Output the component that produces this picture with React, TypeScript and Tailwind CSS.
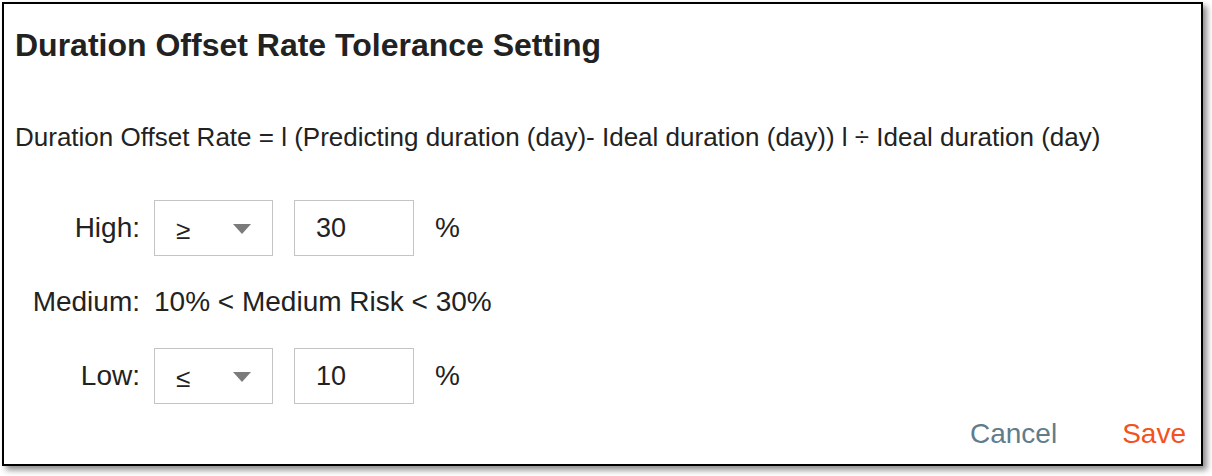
import React, { useState } from 'react';

const font = { fontFamily: '"Liberation Sans", Arial, Helvetica, sans-serif' };

function OperatorSelect({ value }: { value: string }) {
  return (
    <div className="flex h-[56px] w-[119px] items-center border border-[#c4c4c4] bg-white pl-[21px] pr-[21px]">
      <span className="mt-[4px] flex-1 text-[26px] leading-none text-[#222]">{value}</span>
      <svg width="18" height="10" viewBox="0 0 18 10" className="mt-[1px]">
        <path d="M0 0 H18 L9 10 Z" fill="#7b7b7b" />
      </svg>
    </div>
  );
}

function PercentInput({ value }: { value: string }) {
  const [v, setV] = useState(value);
  return (
    <input
      value={v}
      onChange={(e) => setV(e.target.value)}
      className="h-[56px] w-[120px] border border-[#c4c4c4] bg-white px-[21px] text-[27px] text-[#222] outline-none"
      style={font}
    />
  );
}

export default function App() {
  return (
    <div className="h-[476px] w-[1212px] bg-white p-[2px]" style={font}>
      <div className="flex h-[464px] w-[1201px] flex-col border-2 border-black bg-white px-[11px] shadow-[4px_4px_6px_rgba(0,0,0,0.45)]">
        <h1 className="mt-[22px] text-[32px] font-bold leading-[38px] text-[#222]">
          Duration Offset Rate Tolerance Setting
        </h1>

        <p className="mt-[58px] text-[26px] leading-[30px] text-[#222]">
          Duration Offset Rate = l (Predicting duration (day)- Ideal duration (day)) l ÷ Ideal duration (day)
        </p>

        <div className="mt-[48px] flex flex-col gap-[18px] text-[28px] text-[#222]">
          <div className="flex items-center">
            <span className="w-[125px] text-right">High:</span>
            <div className="ml-[14px] flex items-center gap-[21px]">
              <OperatorSelect value="≥" />
              <PercentInput value="30" />
              <span>%</span>
            </div>
          </div>

          <div className="flex h-[56px] items-center">
            <span className="w-[125px] text-right">Medium:</span>
            <span className="ml-[14px]">10% &lt; Medium Risk &lt; 30%</span>
          </div>

          <div className="flex items-center">
            <span className="w-[125px] text-right">Low:</span>
            <div className="ml-[14px] flex items-center gap-[21px]">
              <OperatorSelect value="≤" />
              <PercentInput value="10" />
              <span>%</span>
            </div>
          </div>
        </div>

        <div className="mt-auto mb-[9px] flex justify-end gap-[65px] pr-[4px] text-[28px]">
          <button className="text-[#5f7d8b]">Cancel</button>
          <button className="text-[#f4511e]">Save</button>
        </div>
      </div>
    </div>
  );
}
